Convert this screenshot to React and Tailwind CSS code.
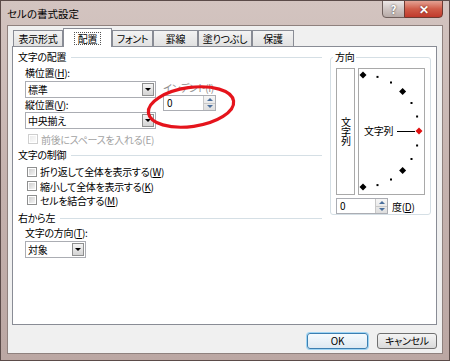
import React from "react";

// Combo box with a small drop button on the right
function Combo({ width, text }) {
  return (
    <div className={`flex h-[17px] border border-[#abadb3] bg-white ${width}`}>
      <span className="flex-1 pl-[2px] leading-[15px]">{text}</span>
      <span className="m-px flex w-[12px] items-center justify-center border border-[#8e8f8f] bg-gradient-to-b from-[#f4f4f4] to-[#d4d4d4]">
        <span className="h-0 w-0 border-x-[3px] border-t-[3px] border-x-transparent border-t-black" />
      </span>
    </div>
  );
}

// Numeric spin box
function Spin({ width, value }) {
  return (
    <div className={`flex h-[16px] border border-[#abadb3] bg-white ${width}`}>
      <span className="flex-1 pl-[3px] leading-[14px]">{value}</span>
      <span className="flex w-[12px] flex-col border-l border-[#c8c8c8] bg-gradient-to-b from-[#f6f6f6] to-[#dedede]">
        <span className="flex flex-1 items-center justify-center border-b border-[#c8c8c8]">
          <span className="h-0 w-0 border-x-[3px] border-b-[3px] border-x-transparent border-b-[#4a6f9c]" />
        </span>
        <span className="flex flex-1 items-center justify-center">
          <span className="h-0 w-0 border-x-[3px] border-t-[3px] border-x-transparent border-t-[#4a6f9c]" />
        </span>
      </span>
    </div>
  );
}

function Check({ label, disabled }) {
  return (
    <div className={`flex items-center gap-[3px] ${disabled ? "text-[#a3a3a3]" : ""}`}>
      <span className={`flex h-[10px] w-[10px] shrink-0 border ${disabled ? "border-[#cfcfcf]" : "border-[#8e8f8f]"} bg-white p-px`}>
        <span className={`flex-1 bg-gradient-to-br ${disabled ? "from-[#ececec] to-[#fbfbfb]" : "from-[#cfcfcf] to-[#f5f5f5]"}`} />
      </span>
      <span>{label}</span>
    </div>
  );
}

function Heading({ text }) {
  return (
    <div className="flex h-[14px] items-center">
      <span className="leading-[14px]">{text}</span>
      <span className="ml-[5px] h-px flex-1 bg-[#d5dfe5]" />
    </div>
  );
}

// Orientation dial: semicircle of dots with a red marker at 0°
function Dial() {
  const cx = 4, cy = 62, r = 56;
  const marks = [90, 75, 60, 45, 30, 15, 0, -15, -30, -45, -60, -75, -90];
  return (
    <svg width="65" height="125" viewBox="0 0 65 125">
      {marks.map((a) => {
        const x = cx + r * Math.cos((a * Math.PI) / 180);
        const y = cy - r * Math.sin((a * Math.PI) / 180);
        if (a % 45 === 0) {
          const s = 3.5;
          return (
            <polygon key={a} points={`${x},${y - s} ${x + s},${y} ${x},${y + s} ${x - s},${y}`}
              fill={a === 0 ? "#e01010" : "#000"} />
          );
        }
        return <rect key={a} x={x - 1} y={y - 1} width="2" height="2" fill="#000" />;
      })}
      <text x="5" y="66" fontSize="10" fontFamily="'Noto Sans CJK JP', sans-serif" fill="#000">文字列</text>
      <line x1="38" y1="62.5" x2="56" y2="62.5" stroke="#000" strokeWidth="1" />
    </svg>
  );
}

export default function App() {
  const tabs = ["表示形式", "配置", "フォント", "罫線", "塗りつぶし", "保護"];
  const tabWidths = ["w-[50px]", "w-[49px]", "w-[41px]", "w-[45px]", "w-[54px]", "w-[42px]"];

  return (
    <div className="relative h-[361px] w-[450px] overflow-hidden border border-[#5b4b49] bg-gradient-to-b from-[#d3c4c0] via-[#c5b2ae] to-[#bba7a3] font-['Noto_Sans_CJK_JP',sans-serif] text-[10px] tracking-[-0.3px] text-black [font-feature-settings:'palt']">
      {/* title bar */}
      <div className="flex h-[24px]">
        <span className="pl-[6px] pt-[6px] text-[10.5px] leading-[14px] tracking-normal">セルの書式設定</span>
        <div className="ml-auto mr-[6px] flex h-[18px] -mt-px">
          <div className="flex w-[23px] items-center justify-center rounded-bl-[4px] border border-[#6e5f5c] bg-gradient-to-b from-[#ece7e6] via-[#cfc5c3] to-[#b7aaa7] text-[11px] font-bold text-white [text-shadow:0_0_2px_#333]">?</div>
          <div className="-ml-px flex w-[39px] items-center justify-center rounded-br-[4px] border border-[#6e3a32] bg-gradient-to-b from-[#e3a193] via-[#cf5b48] to-[#c0392b] text-[12px] font-bold text-white [text-shadow:0_0_2px_#5a1a10]">✕</div>
        </div>
      </div>

      {/* client area */}
      <div className="ml-[6px] h-[329px] w-[436px] border border-[#8f817e] bg-[#f0f0f0] px-[4px] pt-[3px]">
        {/* tabs */}
        <div className="flex h-[17px] items-end pl-px">
          {tabs.map((t, i) =>
            i === 1 ? (
              <div key={t} className={`relative z-10 -mb-px flex h-[19px] items-start justify-center border border-b-0 border-[#898c95] bg-white pt-[3px] leading-[12px] ${tabWidths[i]}`}>
                <span className="border border-dotted border-[#555] px-[3px] leading-[11px]">{t}</span>
              </div>
            ) : (
              <div key={t} className={`flex h-[16px] items-center justify-center border border-b-0 border-[#898c95] bg-gradient-to-b from-[#f3f3f3] to-[#e1e1e1] leading-[14px] ${tabWidths[i]}`}>
                {t}
              </div>
            )
          )}
        </div>

        {/* tab panel */}
        <div className="flex h-[279px] w-[425px] border border-[#898c95] bg-white">
          {/* left column */}
          <div className="w-[309px] pl-[5px] pt-[3px]">
            <Heading text="文字の配置" />
            <div className="pl-[7px]">
              <div className="h-[17px] leading-[17px]">横位置(<u>H</u>):</div>
              <div className="flex">
                <div className="w-[131px]">
                  <Combo width="w-[131px]" text="標準" />
                  <div className="h-[14px] leading-[14px]">縦位置(<u>V</u>):</div>
                  <Combo width="w-[131px]" text="中央揃え" />
                </div>
                <div className="ml-[7px]">
                  <div className="h-[14px] leading-[14px] text-[#8d8d8d]">インデント(I)</div>
                  <Spin width="w-[53px]" value="0" />
                </div>
              </div>
              <div className="mt-[3px] flex h-[14px] pl-[3px]">
                <Check label="前後にスペースを入れる(E)" disabled />
              </div>
            </div>

            <div className="mt-[2px]">
              <Heading text="文字の制御" />
            </div>
            <div className="pl-[9px] pt-[2px]">
              <div className="flex h-[15px]"><Check label={<>折り返して全体を表示する(<u>W</u>)</>} /></div>
              <div className="flex h-[14px]"><Check label={<>縮小して全体を表示する(<u>K</u>)</>} /></div>
              <div className="flex h-[14px]"><Check label={<>セルを結合する(<u>M</u>)</>} /></div>
            </div>

            <div className="mt-[4px]">
              <Heading text="右から左" />
            </div>
            <div className="pl-[7px]">
              <div className="h-[15px] leading-[15px]">文字の方向(<u>T</u>):</div>
              <div className="mt-px">
                <Combo width="w-[61px]" text="対象" />
              </div>
            </div>
          </div>

          {/* orientation group */}
          <fieldset className="ml-[8px] mt-[3px] h-[165px] w-[101px] rounded-[3px] border border-[#d5dfe5]">
            <legend className="ml-[2px] px-[2px] leading-[14px]">方向</legend>
            <div className="flex gap-[3px] pl-[5px] pt-[4px]">
              <div className="flex h-[127px] w-[19px] items-center justify-center border border-[#a9a9a9]">
                <span className="leading-[12px] [writing-mode:vertical-rl]">文字列</span>
              </div>
              <div className="h-[127px] w-[67px] border border-[#a9a9a9]">
                <Dial />
              </div>
            </div>
            <div className="mt-[3px] flex items-center pl-[5px]">
              <Spin width="w-[52px]" value="0" />
              <span className="ml-[4px]">度(<u>D</u>)</span>
            </div>
          </fieldset>
        </div>

        {/* dialog buttons */}
        <div className="mt-[8px] flex justify-end gap-[9px] pr-[1px]">
          <button className="h-[16px] w-[61px] rounded-[3px] border border-[#3c7fb1] bg-gradient-to-b from-[#f6fbfe] to-[#dde9f2] leading-[14px] shadow-[0_0_0_1px_#9fd5f4]">OK</button>
          <button className="h-[16px] w-[60px] rounded-[3px] border border-[#707070] bg-gradient-to-b from-[#f4f4f4] to-[#dadada] leading-[14px]">キャンセル</button>
        </div>
      </div>

      {/* red annotation ellipse */}
      <svg className="absolute left-[142px] top-[81px]" width="96" height="50" viewBox="0 0 96 50">
        <ellipse cx="48" cy="25" rx="43" ry="19.5" fill="none" stroke="#e5141c" strokeWidth="3.2" transform="rotate(-8 48 25)" />
      </svg>
    </div>
  );
}
